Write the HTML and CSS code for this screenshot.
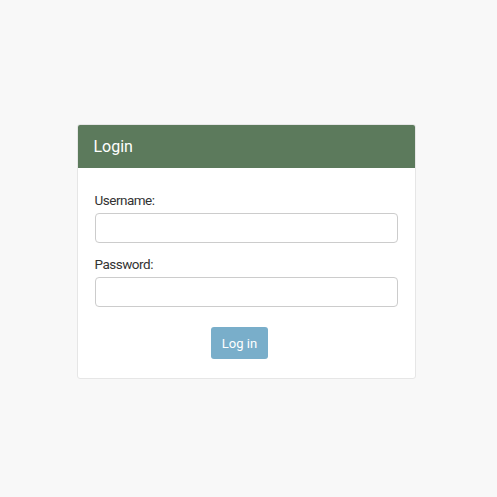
FILE: index.html
```html
<!DOCTYPE html>
<html lang="en">
  <head>
    <meta charset="UTF-8" />
    <meta name="viewport" content="width=device-width, initial-scale=1.0" />
    <title>Login</title>
    <link rel="stylesheet" href="styles.css">
  </head>
  <body>
    <div class="login-card">
      <div class="login-header">Login</div>
      <form class="login-form">
        <label class="field-label" for="username">Username:</label>
        <input class="field-input" type="text" id="username" />
        <label class="field-label" for="password">Password:</label>
        <input class="field-input" type="password" id="password" />
        <div class="actions">
          <button class="login-button" type="button">Log in</button>
        </div>
      </form>
    </div>
  </body>
</html>
```

FILE: styles.css
```css
:root {
  --header-color: #5c7a5c;
  --button-color: #79aeca;
  --background-color: #f8f8f8;
  --border-color: #e6e6e6;
  --text-primary: #333333;
}

* {
  box-sizing: border-box;
  margin: 0;
  padding: 0;
}

body {
  font-family: Roboto, "Liberation Sans", sans-serif;
  background-color: var(--background-color);
  min-height: 100vh;
  display: flex;
  justify-content: center;
  align-items: flex-start;
  padding-top: 124px;
}

.login-card {
  width: 339px;
  margin-left: -5px;
  background-color: #ffffff;
  border: 1px solid var(--border-color);
  border-radius: 3px;
  overflow: hidden;
}

.login-header {
  background-color: var(--header-color);
  color: #ffffff;
  font-size: 16px;
  height: 43px;
  line-height: 43px;
  padding-left: 16px;
}

.login-form {
  display: flex;
  flex-direction: column;
  padding: 22px 17px 19px 17px;
}

.field-label {
  color: var(--text-primary);
  font-size: 13.5px;
  letter-spacing: -0.5px;
  line-height: 20px;
  margin-bottom: 3px;
}

.field-input {
  height: 30px;
  border: 1px solid #cccccc;
  border-radius: 4px;
  margin-bottom: 11px;
  font-family: inherit;
  font-size: 14px;
  padding: 0 8px;
}

.actions {
  display: flex;
  justify-content: center;
  margin-top: 9px;
  padding-right: 13px;
}

.login-button {
  background-color: var(--button-color);
  color: #ffffff;
  border: none;
  border-radius: 3px;
  width: 57px;
  height: 32px;
  font-family: inherit;
  font-size: 13px;
  cursor: pointer;
}
```
